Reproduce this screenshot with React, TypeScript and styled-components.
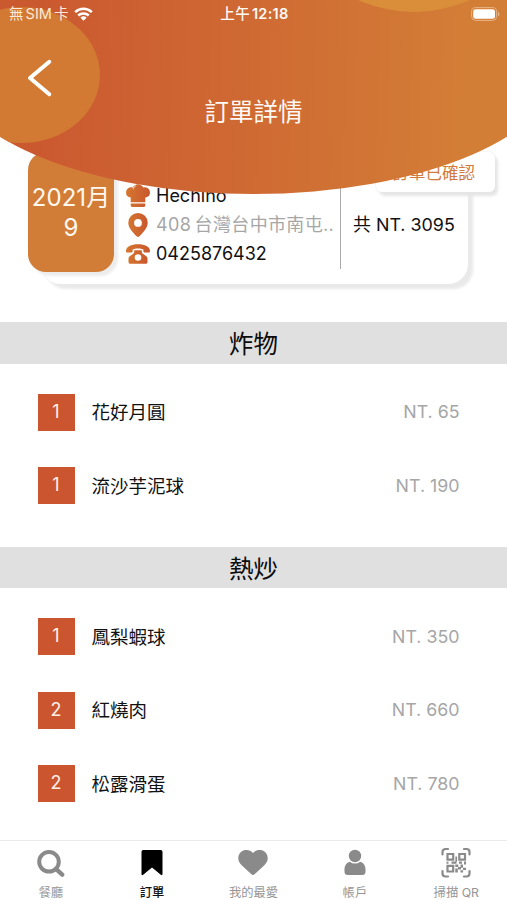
import React from "react";
import styled, { createGlobalStyle } from "styled-components";

const GlobalStyle = createGlobalStyle`
  * { box-sizing: border-box; }
  body {
    margin: 0;
    background: #fff;
    color: #111;
    font-family: "Inter", "Noto Sans CJK TC", sans-serif;
  }
`;

const Screen = styled.div`
  display: flex;
  flex-direction: column;
  width: 507px;
  height: 900px;
  overflow: hidden;
  background: #fff;
`;

const Header = styled.header`
  position: relative;
  z-index: 2;
  flex: none;
  height: 194px;
  overflow: hidden;
  color: #fffaf5;
  background: linear-gradient(92deg, #cb5930 8%, #cf6a33 50%, #d37e37 92%);
  clip-path: ellipse(310px 135px at 50% 59px);
`;

const Blob = styled.div<{ $x: number; $y: number; $w: number; $h: number; $color: string }>`
  position: absolute;
  left: ${(p) => p.$x}px;
  top: ${(p) => p.$y}px;
  width: ${(p) => p.$w}px;
  height: ${(p) => p.$h}px;
  border-radius: 50%;
  background: ${(p) => p.$color};
`;

const StatusBar = styled.div`
  position: relative;
  display: grid;
  grid-template-columns: 1fr auto 1fr;
  align-items: center;
  height: 27px;
  padding: 0 7px 0 9px;
  font-size: 14.5px;
  line-height: 20px;
`;

const Carrier = styled.div`
  display: flex;
  align-items: center;
  gap: 6px;
  color: #ffe9d9;
  span { word-spacing: -2px; }
`;

const Clock = styled.div`
  position: relative;
  font-weight: 600;
  font-size: 14.5px;
  letter-spacing: 0.3px;
  word-spacing: -2px;
`;

const HourPrefix = styled.span`
  font-weight: 500;
`;

const BatterySlot = styled.div`
  display: flex;
  justify-content: flex-end;
`;

const BackButton = styled.button`
  position: relative;
  display: block;
  margin: 31px 0 0 26px;
  padding: 0;
  border: 0;
  background: none;
  height: 40px;
  line-height: 0;
`;

const Title = styled.h1`
  position: relative;
  margin: -4px 0 0;
  height: 36px;
  line-height: 36px;
  text-align: center;
  font-size: 24.5px;
  font-weight: 400;
`;

const Summary = styled.section`
  position: relative;
  z-index: 1;
  display: flex;
  flex: none;
  height: 132px;
  margin: -42px 39px 0 28px;
`;

const SummaryCard = styled.div`
  display: flex;
  flex: 1;
  margin-left: -73px;
  padding: 29px 0 0 85px;
  border-radius: 10px 20px 20px 20px;
  background: #fff;
  box-shadow: 5px 5px 3px 0 #e9e9e9, 0 0 1px #ddd;
`;

const DateBadge = styled.div`
  position: relative;
  z-index: 1;
  flex: none;
  width: 86px;
  height: 120px;
  padding-top: 31px;
  border-radius: 18px;
  background: #d27d37;
  box-shadow: 4px 4px 3px #ececec;
  color: #fff8f0;
  font-size: 24px;
  line-height: 30px;
  letter-spacing: 0.1px;
  text-align: center;
  white-space: nowrap;
`;

const Contact = styled.div`
  flex: none;
  width: 215px;
  height: 88px;
  border-right: 1px solid #a9a9a9;
`;

const ContactLine = styled.div<{ $muted?: boolean }>`
  display: grid;
  grid-template-columns: 24px 1fr;
  align-items: center;
  column-gap: 6px;
  height: 29px;
  font-size: 18px;
  line-height: 29px;
  white-space: nowrap;
  letter-spacing: ${(p) => (p.$muted ? "0.35px" : "0")};
  word-spacing: ${(p) => (p.$muted ? "-2px" : "0")};
  color: ${(p) => (p.$muted ? "#a6a6a6" : "#111")};
  svg { display: block; justify-self: center; }
`;

const Total = styled.div`
  flex: 1;
  padding: 29px 0 0 12px;
  font-size: 17.9px;
  line-height: 29px;
  white-space: nowrap;
`;

const OrderState = styled.div`
  position: absolute;
  right: -27px;
  top: 0;
  width: 119px;
  height: 40px;
  padding-right: 20px;
  border-radius: 6px;
  background: #fff;
  box-shadow: 3px 4px 3px #e6e6e6, 0 0 2px #ddd;
  color: #d27a3c;
  font-size: 16.5px;
  line-height: 43px;
  text-align: right;
`;

const Menu = styled.main`
  flex: 1;
  display: flex;
  flex-direction: column;
  gap: 24.5px;
  padding-top: 38px;
`;

const SectionTitle = styled.h2`
  margin: 0 0 12px;
  height: 41.5px;
  background: #e0e0e0;
  color: #0c0c0c;
  font-size: 24.5px;
  font-weight: 400;
  line-height: 44px;
  text-align: center;
`;

const Item = styled.div`
  display: grid;
  grid-template-columns: 37px 1fr auto;
  align-items: center;
  column-gap: 17px;
  height: 73.3px;
  padding: 0 47.5px 0 37.5px;
  font-size: 18.5px;
  line-height: 28px;
`;

const Quantity = styled.div`
  height: 37px;
  background: #cb552f;
  color: #fff0e8;
  font-size: 18px;
  line-height: 35px;
  text-align: center;
`;

const Dish = styled.div`
  padding-top: 0.5px;
`;

const Price = styled.div`
  padding-top: 0.5px;
  color: #a6a6a6;
  font-size: 17.8px;
`;

const TabBar = styled.nav`
  display: grid;
  grid-template-columns: repeat(5, 1fr);
  flex: none;
  height: 60px;
  border-top: 1px solid #ebebeb;
  background: #fff;
`;

const Tab = styled.div<{ $active?: boolean }>`
  display: flex;
  flex-direction: column;
  align-items: center;
  padding-top: 5px;
  color: ${(p) => (p.$active ? "#000" : "#8a8a8a")};
  svg { display: block; height: 34px; }
  span {
    margin-top: 4px;
    font-size: 12.3px;
    line-height: 18px;
    font-weight: ${(p) => (p.$active ? 500 : 400)};
    color: ${(p) => (p.$active ? "#111" : "#969696")};
  }
`;

const WifiIcon = () => (
  <svg width="19" height="14" viewBox="0 0 19 14" fill="none" stroke="#fff" strokeWidth="2.5">
    <path d="M1.2 5.2a12 12 0 0 1 16.6 0M4.2 8.5a7.7 7.7 0 0 1 10.6 0" />
    <path d="M9.5 13.7 6.4 10.7a4.5 4.5 0 0 1 6.2 0z" fill="#fff" stroke="none" />
  </svg>
);

const BatteryIcon = () => (
  <svg width="29" height="14" viewBox="0 0 29 14">
    <rect x="0.6" y="0.6" width="25" height="12.8" rx="4" fill="none" stroke="#e8b486" strokeWidth="1" />
    <rect x="2.2" y="2.2" width="21.8" height="9.6" rx="2.4" fill="#fff" />
    <path d="M27 4.7c1.8.7 1.8 3.9 0 4.6z" fill="#e8b486" />
  </svg>
);

const BackIcon = () => (
  <svg width="28" height="40" viewBox="0 0 28 40" fill="none" stroke="#fff" strokeWidth="4" strokeLinecap="round" strokeLinejoin="round">
    <path d="M23.3 3.8 4 20l19.3 16.3" />
  </svg>
);

const IconGradient = ({ id }: { id: string }) => (
  <linearGradient id={id} x1="0" x2="1" y1="0" y2="0">
    <stop offset="0" stopColor="#d5762f" />
    <stop offset="1" stopColor="#c9572e" />
  </linearGradient>
);

const ChefIcon = () => (
  <svg width="24" height="25" viewBox="0 0 24 25" fill="url(#chef)">
    <defs><IconGradient id="chef" /></defs>
    <path d="M4.7 19.2v-4.6A5.300 5.300 0 0 1 0 9.500a5.300 5.300 0 0 1 6.600-5.100 6.300 6.300 0 0 1 10.800 0A5.300 5.300 0 0 1 24 9.500a5.300 5.300 0 0 1-4.700 5.100v4.600zM4.700 20.400h14.600v2.200a1.400 1.400 0 0 1-1.400 1.400H6.100a1.400 1.400 0 0 1-1.400-1.400z" />
    <path d="M7.200 6.200c.3-1.500 1-2.500 2.400-3.400" stroke="#fff" strokeWidth=".9" fill="none" />
  </svg>
);

const PinIcon = () => (
  <svg width="20" height="24" viewBox="0 0 20 24" fill="url(#pin)">
    <defs><IconGradient id="pin" /></defs>
    <path fillRule="evenodd" d="M10 0a9.700 9.700 0 0 1 9.700 9.700c0 4.700-3.900 9-8 13.400a2.300 2.300 0 0 1-3.400 0C4.200 18.700.3 14.400.3 9.700A9.700 9.700 0 0 1 10 0zm0 6a3.900 3.900 0 1 0 0 7.800A3.900 3.900 0 0 0 10 6z" />
  </svg>
);

const PhoneIcon = () => (
  <svg width="24" height="20" viewBox="0 0 24 20" fill="url(#phone)">
    <defs><IconGradient id="phone" /></defs>
    <path d="M0 7.100C0 2.500 5.200.3 12 .3s12 2.200 12 6.800c0 1-.4 1.500-1.400 1.500h-3.800c-1 0-1.400-.5-1.400-1.400V5.500C14.800 4 9.200 4 6.600 5.500v1.700c0 .9-.4 1.400-1.400 1.400H1.400C.4 8.600 0 8.100 0 7.100z" />
    <path fillRule="evenodd" d="M8.200 6.200h7.600v1.500c0 1 .3 1.500 1 2l3.500 2.600c.8.600 1.200 1.500 1.200 2.500v3.100c0 1.200-.7 1.800-1.800 1.800H4.300c-1.100 0-1.800-.6-1.800-1.800v-3.100c0-1 .4-1.900 1.200-2.500l3.500-2.600c.7-.5 1-1 1-2zm3.800 4a3.300 3.300 0 1 0 0 6.600 3.300 3.300 0 0 0 0-6.600z" />
  </svg>
);

const SearchIcon = () => (
  <svg width="28" viewBox="0 0 28 34" fill="none" stroke="currentColor">
    <circle cx="12" cy="15.800" r="9.800" strokeWidth="4" />
    <path d="m19.200 23.200 6 5.500" strokeWidth="4.300" strokeLinecap="round" />
  </svg>
);

const BookmarkIcon = () => (
  <svg width="24" viewBox="0 0 24 34" fill="currentColor">
    <path d="M3.500 4h17c1.300 0 2 .7 2 2v22c0 1.100-.8 1.500-1.700.8L12 21.600l-8.800 7.200c-.9.700-1.700.3-1.700-.8V6c0-1.300.7-2 2-2z" />
  </svg>
);

const HeartIcon = () => (
  <svg width="30" viewBox="0 0 30 34" fill="currentColor">
    <path d="M15 6.900C17.300 4.300 20 3.800 22.500 4.100c4.500.5 7.200 4.100 7.200 8.100 0 3-1.500 5.300-3.900 7.500l-9.200 8.600a2.300 2.300 0 0 1-3.200 0l-9.200-8.600C1.800 17.500.3 15.200.3 12.200c0-4 2.700-7.600 7.200-8.100 2.500-.3 5.200.2 7.500 2.800z" />
  </svg>
);

const UserIcon = () => (
  <svg width="22" viewBox="0 0 22 34" fill="currentColor">
    <circle cx="11" cy="10" r="6.200" />
    <path d="M5.800 15.700a8 8 0 0 0 10.400 0c3.200.8 5.300 3.900 5.300 7.500v2.600c0 2.200-1.200 3.300-3.400 3.300H3.900C1.700 29.100.5 28 .5 25.800v-2.600c0-3.600 2.100-6.700 5.300-7.500z" />
  </svg>
);

const QrIcon = () => (
  <svg width="30" viewBox="0 0 30 34" fill="none" stroke="currentColor">
    <path strokeWidth="2.200" strokeLinecap="round" d="M1.500 8.500V6a3 3 0 0 1 3-3H7M23 3h2.500a3 3 0 0 1 3 3v2.500M28.500 25v2.500a3 3 0 0 1-3 3H23M7 30.500H4.500a3 3 0 0 1-3-3V25" />
    <path strokeWidth="2.200" d="M6.500 8h5.700v5.700H6.500zM18.300 8H24v5.700h-5.700zM6.500 19.800h5.700v5.700H6.500z" />
    <path fill="currentColor" stroke="none" d="M14.400 10.500h1.700v5h-1.700zM5.500 15.700h2v2h-2zM10.500 15.500h5v2.200h-5zM18 15.500h3v2.200h-3zM23 15.500h2v3h-2zM14.300 18.500h3v2.500h-3zM19.500 18.500H22v3.200h-2.500zM17 21h3v2.600h-3zM14.300 22.500h2.500v4h-2.500zM22 21.700h3v2.300h-3zM19.500 24.300h2.600v2.200h-2.600z" />
  </svg>
);

const sections = [
  {
    title: "炸物",
    items: [
      { qty: 1, name: "花好月圓", price: 65 },
      { qty: 1, name: "流沙芋泥球", price: 190 },
    ],
  },
  {
    title: "熱炒",
    items: [
      { qty: 1, name: "鳳梨蝦球", price: 350 },
      { qty: 2, name: "紅燒肉", price: 660 },
      { qty: 2, name: "松露滑蛋", price: 780 },
    ],
  },
];

const tabs = [
  { label: "餐廳", Icon: SearchIcon },
  { label: "訂單", Icon: BookmarkIcon, active: true },
  { label: "我的最愛", Icon: HeartIcon },
  { label: "帳戶", Icon: UserIcon },
  { label: "掃描 QR", Icon: QrIcon },
];

export default function App() {
  return (
    <>
      <GlobalStyle />
      <Screen>
        <Header>
          <Blob $x={-56} $y={7} $w={156} $h={136} $color="#d27933" />
          <Blob $x={277} $y={-262} $w={274} $h={274} $color="#da8e39" />
          <StatusBar>
            <Carrier><span>無 SIM 卡</span><WifiIcon /></Carrier>
            <Clock><HourPrefix>上午</HourPrefix> 12:18</Clock>
            <BatterySlot><BatteryIcon /></BatterySlot>
          </StatusBar>
          <BackButton aria-label="返回"><BackIcon /></BackButton>
          <Title>訂單詳情</Title>
        </Header>

        <Summary>
          <DateBadge>2021月<br />9</DateBadge>
          <SummaryCard>
            <Contact>
              <ContactLine><ChefIcon />Hechino</ContactLine>
              <ContactLine $muted><PinIcon />408 台灣台中市南屯..</ContactLine>
              <ContactLine><PhoneIcon />0425876432</ContactLine>
            </Contact>
            <Total>共 NT. 3095</Total>
          </SummaryCard>
          <OrderState>訂單已確認</OrderState>
        </Summary>

        <Menu>
          {sections.map((section) => (
            <section key={section.title}>
              <SectionTitle>{section.title}</SectionTitle>
              {section.items.map((item) => (
                <Item key={item.name}>
                  <Quantity>{item.qty}</Quantity>
                  <Dish>{item.name}</Dish>
                  <Price>NT. {item.price}</Price>
                </Item>
              ))}
            </section>
          ))}
        </Menu>

        <TabBar>
          {tabs.map(({ label, Icon, active }) => (
            <Tab key={label} $active={active}><Icon /><span>{label}</span></Tab>
          ))}
        </TabBar>
      </Screen>
    </>
  );
}
